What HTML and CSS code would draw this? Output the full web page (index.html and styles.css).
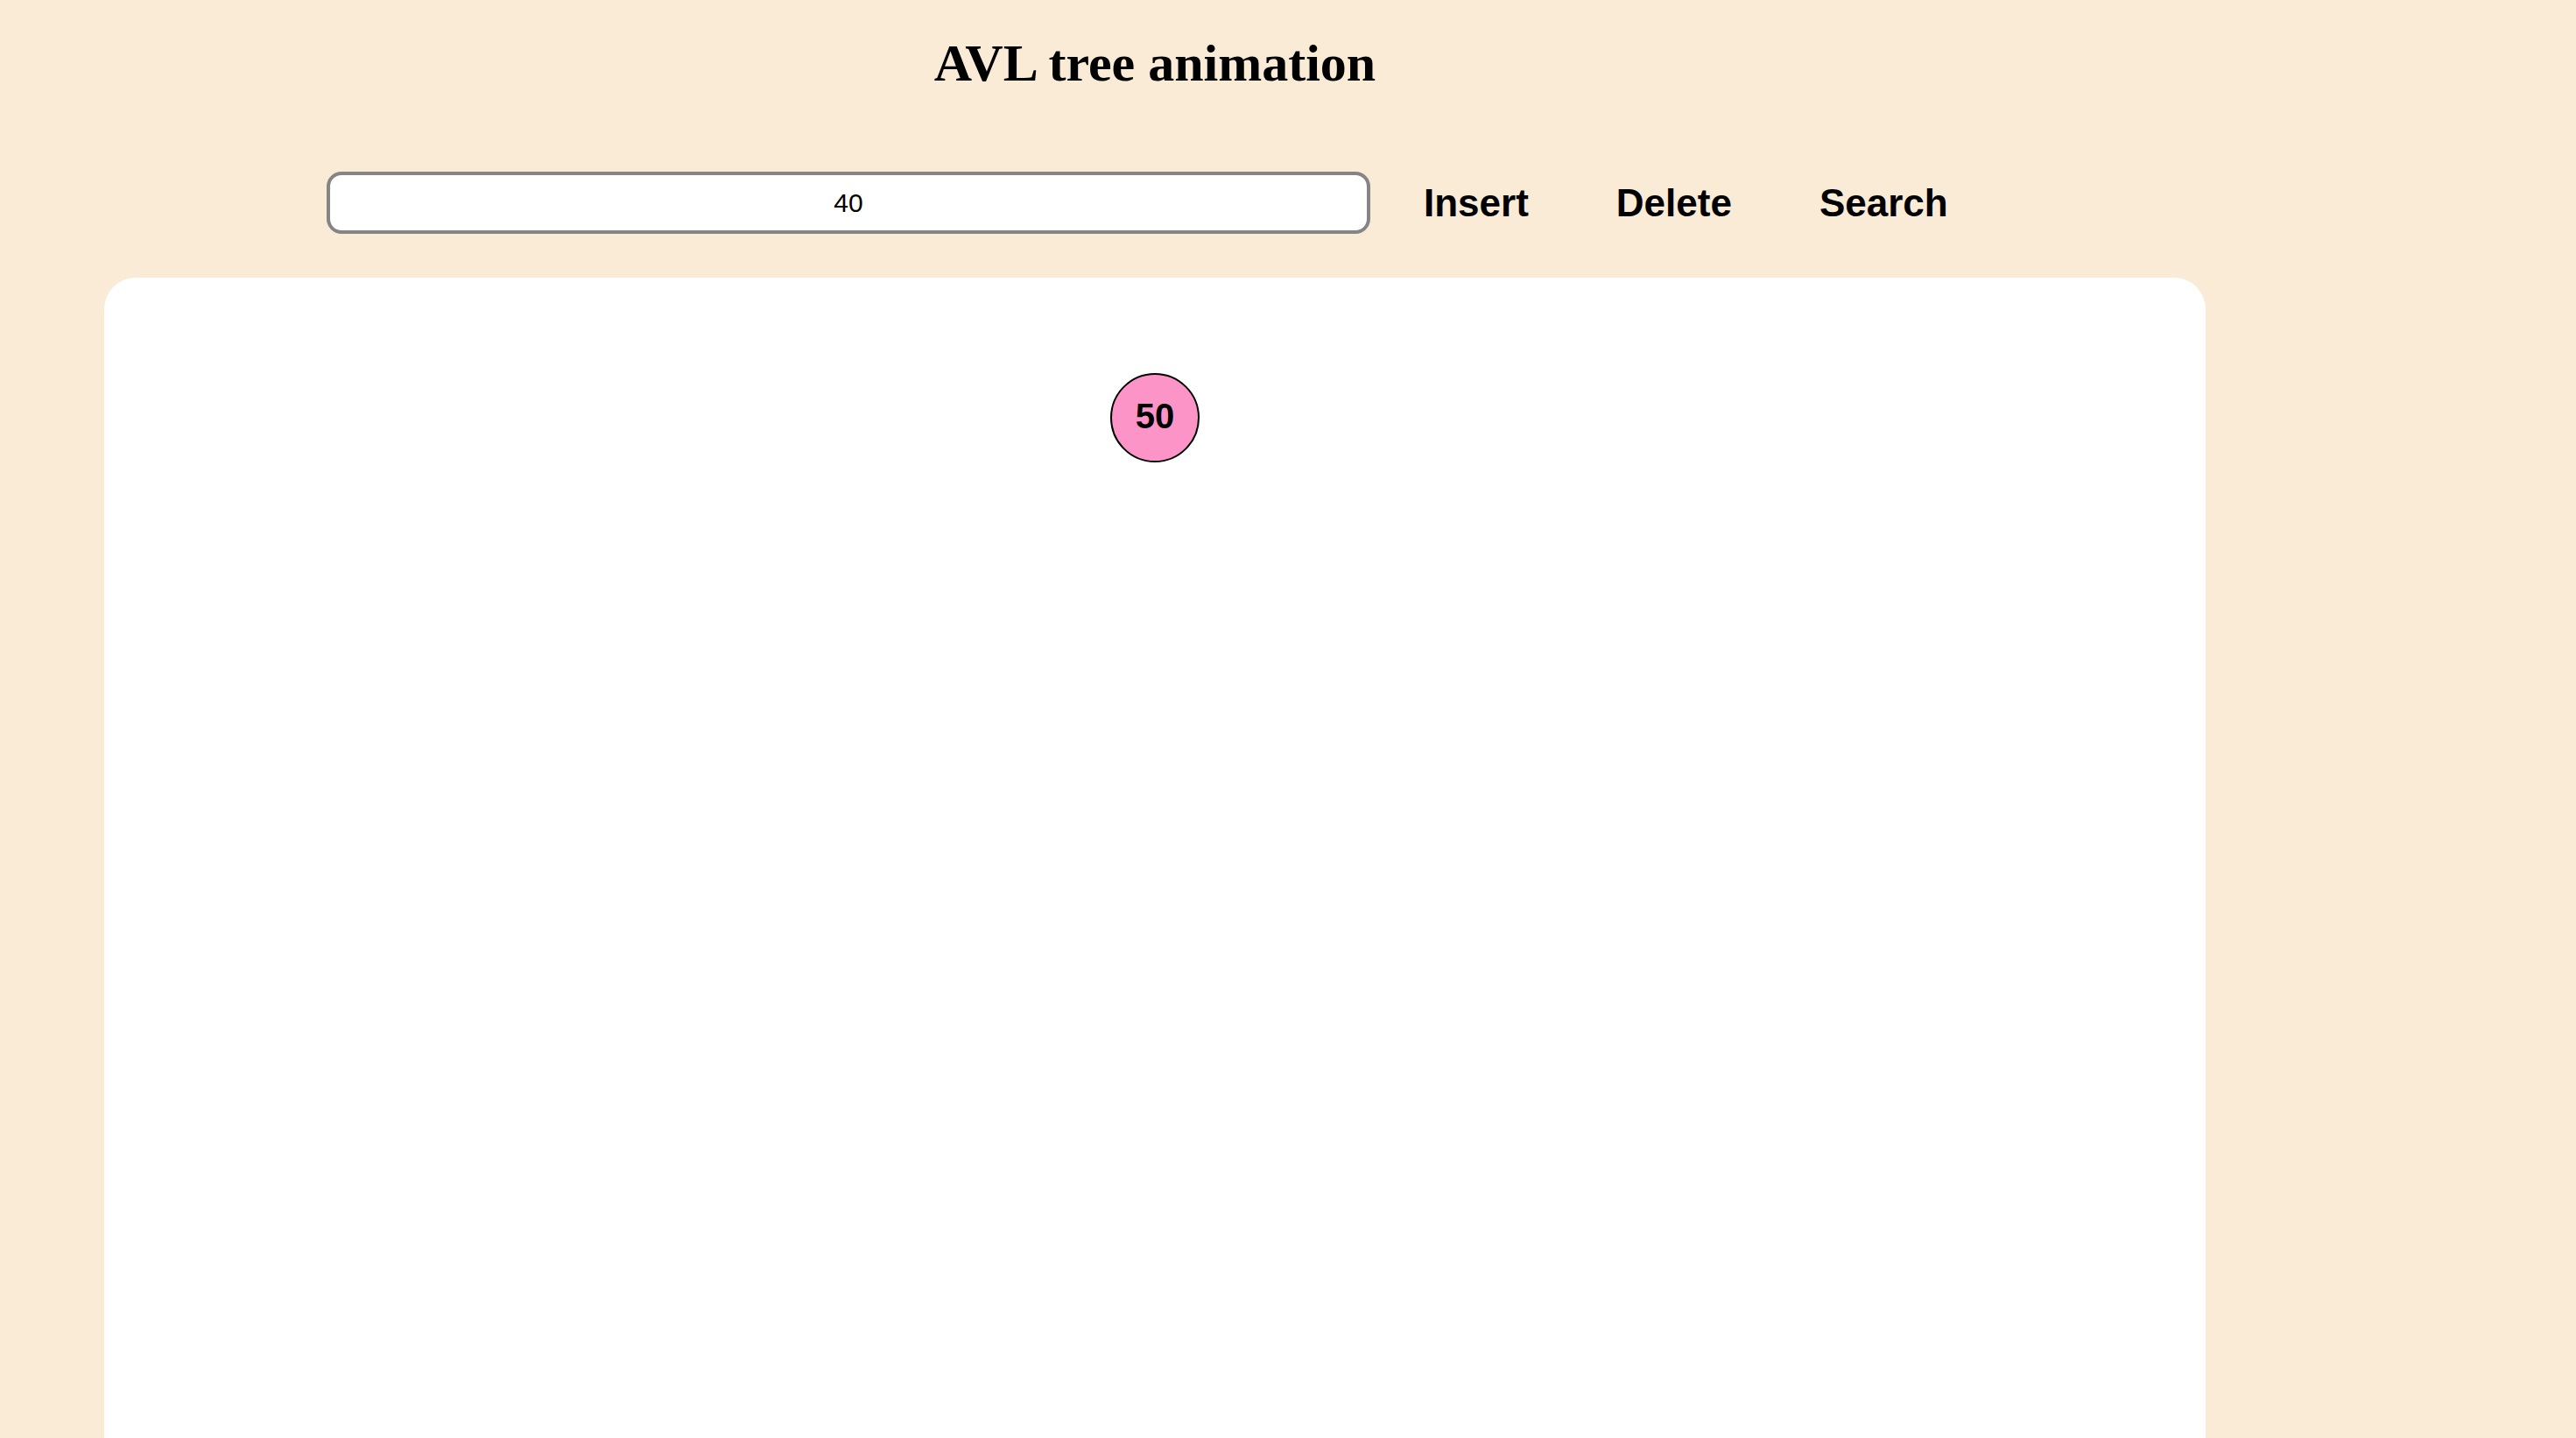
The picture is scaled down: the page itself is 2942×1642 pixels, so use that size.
FILE: index.html
```html
<!DOCTYPE html>
<html>
<head>
<meta charset="utf-8">
<title>AVL tree animation</title>
<link rel="stylesheet" href="styles.css">
</head>
<body>
<div class="page">
  <h1 class="title">AVL tree animation</h1>
  <div class="controls">
    <input class="value-input" type="text" value="40">
    <div class="buttons">
      <button class="btn">Insert</button>
      <button class="btn">Delete</button>
      <button class="btn">Search</button>
    </div>
  </div>
  <div class="board">
    <svg class="tree" width="2400" height="1400" viewBox="0 0 2400 1400">
      <circle class="node" cx="1200" cy="160" r="50"></circle>
      <text class="node-label" x="1200" y="172" text-anchor="middle">50</text>
    </svg>
  </div>
</div>
</body>
</html>
```
FILE: styles.css
```css
html, body {
  margin: 0;
  padding: 0;
  background: #faebd7;
  overflow: hidden;
}
.page {
  margin-left: 119px;
  width: 2400px;
}
.title {
  margin: 0;
  padding-top: 43px;
  font-family: "Liberation Serif", "Times New Roman", serif;
  font-weight: bold;
  font-size: 60px;
  line-height: 58px;
  text-align: center;
  color: #000;
}
.controls {
  margin-top: 95px;
  padding-left: 254px;
  display: flex;
  align-items: center;
  height: 71px;
}
.value-input {
  box-sizing: border-box;
  width: 1192px;
  height: 71px;
  border: 4px solid #858585;
  border-radius: 17px;
  background: #fff;
  font-family: "Liberation Sans", Arial, sans-serif;
  font-size: 30px;
  text-align: center;
  color: #000;
  outline: none;
  padding: 0 10px;
  margin: 0;
}
.buttons {
  display: flex;
  gap: 100px;
  margin-left: 61px;
}
.btn {
  background: none;
  border: none;
  padding: 0;
  margin: 0;
  font-family: "Liberation Sans", Arial, sans-serif;
  font-weight: bold;
  font-size: 44px;
  color: #000;
  cursor: pointer;
}
.board {
  margin-top: 50px;
  background: #fff;
  border-radius: 36px;
  height: 1400px;
  overflow: hidden;
}
.tree {
  display: block;
}
.node {
  fill: #fd94c7;
  stroke: #000;
  stroke-width: 2;
}
.node-label {
  font-family: "Liberation Sans", Arial, sans-serif;
  font-weight: bold;
  font-size: 40px;
  fill: #000;
}
```
